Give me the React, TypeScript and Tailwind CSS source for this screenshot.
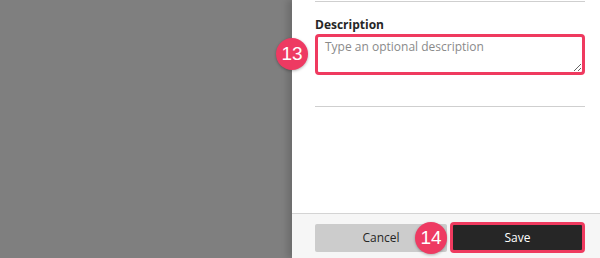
import React from "react";

const Badge = ({ n, className }: { n: number; className: string }) => (
  <div
    className={`absolute flex h-[32px] w-[32px] items-center justify-center rounded-full bg-[#ee3a62] text-[19px] text-white shadow-[0_1px_3px_rgba(0,0,0,0.3)] ${className}`}
    style={{ fontFamily: "'Liberation Sans', Arial, sans-serif" }}
  >
    {n}
  </div>
);

const App = () => {
  return (
    <div
      className="relative flex h-[258px] w-[600px] overflow-hidden bg-white"
      style={{ fontFamily: "'Open Sans', 'Liberation Sans', sans-serif" }}
    >
      <div className="flex-1 bg-[#7f7f7f]" />
      <div className="flex w-[308px] flex-col bg-white shadow-[-5px_0_6px_rgba(0,0,0,0.14)]">
        <div className="flex-1 pl-[23px] pr-[15px]">
          <div className="mt-px border-t border-[#cfcfcf]" />
          <label className="mt-[15px] block text-[12px] font-bold leading-[16px] text-[#262626]">
            Description
          </label>
          <textarea
            className="mt-[1px] block h-[41px] w-full resize-y rounded-[4px] border-[3px] border-[#ef3a5f] px-[7px] py-[2px] text-[12px] leading-[16px] text-[#262626] placeholder:text-[#8a8a8a] focus:outline-none"
            placeholder="Type an optional description"
          />
          <div className="mt-[31px] border-t border-[#cfcfcf]" />
        </div>
        <div className="flex h-[45px] items-start gap-[3px] border-t border-[#d4d4d4] bg-[#f6f6f6] pl-[23px] pr-[15px] pt-[8px]">
          <button className="mt-[2px] h-[28px] w-[132px] rounded-[2px] bg-[#cccccc] text-[12px] text-[#262626]">
            Cancel
          </button>
          <button className="h-[31px] flex-1 rounded-[4px] border-[3px] border-[#ef3a5f] bg-[#262626] text-[12px] text-white">
            Save
          </button>
        </div>
      </div>
      <Badge n={13} className="left-[276px] top-[38px]" />
      <Badge n={14} className="left-[415px] top-[222px]" />
    </div>
  );
};

export default App;
